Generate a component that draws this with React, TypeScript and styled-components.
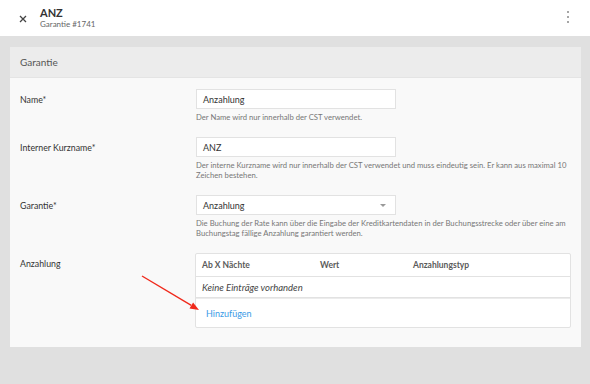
import styled, { createGlobalStyle } from "styled-components";

const GlobalStyle = createGlobalStyle`
  html, body {
    margin: 0;
    padding: 0;
    background: #e0e0e0;
    font-family: Lato, "Open Sans", "Liberation Sans", sans-serif;
  }
`;

const fields = [
  {
    label: "Name*",
    value: "Anzahlung",
    hint: "Der Name wird nur innerhalb der CST verwendet.",
  },
  {
    label: "Interner Kurzname*",
    value: "ANZ",
    hint: "Der interne Kurzname wird nur innerhalb der CST verwendet und muss eindeutig sein. Er kann aus maximal 10 Zeichen bestehen.",
  },
  {
    label: "Garantie*",
    value: "Anzahlung",
    select: true,
    hint: "Die Buchung der Rate kann über die Eingabe der Kreditkartendaten in der Buchungsstrecke oder über eine am Buchungstag fällige Anzahlung garantiert werden.",
  },
];

const App = () => {
  return (
    <>
      <GlobalStyle />
      <Page>
        <Header>
          <CloseButton>
            <svg width="8" height="8" viewBox="0 0 8 8">
              <path d="M1 1L7 7M7 1L1 7" stroke="#444" strokeWidth="1.3" />
            </svg>
          </CloseButton>
          <TitleBlock>
            <Title>ANZ</Title>
            <Subtitle>Garantie #1741</Subtitle>
          </TitleBlock>
          <Kebab>
            <span />
            <span />
            <span />
          </Kebab>
        </Header>

        <Content>
          <Card>
            <CardHeader>Garantie</CardHeader>
            <CardBody>
              {fields.map((f) => (
                <FieldRow key={f.label}>
                  <Label>{f.label}</Label>
                  <Control>
                    <Input>
                      {f.value}
                      {f.select && <Caret />}
                    </Input>
                    <Hint>{f.hint}</Hint>
                  </Control>
                </FieldRow>
              ))}

              <FieldRow>
                <Label>Anzahlung</Label>
                <Control>
                  <Table>
                    <HeadRow>
                      <HeadCell $width={118}>Ab X Nächte</HeadCell>
                      <HeadCell $width={93}>Wert</HeadCell>
                      <HeadCell>Anzahlungstyp</HeadCell>
                    </HeadRow>
                    <EmptyRow>Keine Einträge vorhanden</EmptyRow>
                    <FooterRow>
                      <AddLink>Hinzufügen</AddLink>
                    </FooterRow>
                  </Table>
                  <Arrow width="62" height="40" viewBox="0 0 62 40">
                    <path d="M1 1L50.3 30.4" stroke="#f0291b" strokeWidth="1.4" />
                    <path d="M58 35L48.5 33.4L52.1 27.4Z" fill="#f0291b" />
                  </Arrow>
                </Control>
              </FieldRow>
            </CardBody>
          </Card>
        </Content>
      </Page>
    </>
  );
};

export default App;

/* Styled Components */
const Page = styled.div`
  width: 590px;
  height: 384px;
  display: flex;
  flex-direction: column;
  background: #e0e0e0;
  overflow: hidden;
`;

const Header = styled.div`
  height: 36px;
  background: #ffffff;
  display: flex;
  align-items: center;
  padding: 0 21px 0 19px;
  flex-shrink: 0;
`;

const CloseButton = styled.div`
  width: 9px;
  display: flex;
  align-items: center;
  margin-top: 2px;
`;

const TitleBlock = styled.div`
  display: flex;
  flex-direction: column;
  margin-left: 12px;
  flex: 1;
`;

const Title = styled.div`
  font-size: 11px;
  font-weight: 700;
  color: #333;
  line-height: 13px;
`;

const Subtitle = styled.div`
  font-size: 8px;
  color: #666;
  line-height: 11px;
`;

const Kebab = styled.div`
  display: flex;
  flex-direction: column;
  gap: 3px;
  margin-bottom: 2px;

  span {
    width: 2px;
    height: 2px;
    background: #888;
    border-radius: 50%;
  }
`;

const Content = styled.div`
  padding: 11px 9px 0 10px;
`;

const Card = styled.div`
  background: #f9f9f9;
`;

const CardHeader = styled.div`
  height: 30px;
  background: #ececec;
  border-bottom: 1px solid #e4e4e4;
  display: flex;
  align-items: center;
  padding-left: 10px;
  font-size: 10px;
  color: #555;
`;

const CardBody = styled.div`
  padding: 11px 10px 19px 10px;
  display: flex;
  flex-direction: column;
  gap: 15px;
`;

const FieldRow = styled.div`
  display: flex;
`;

const Label = styled.div`
  width: 176px;
  font-size: 8.8px;
  color: #333;
  padding-top: 5px;
`;

const Control = styled.div`
  flex: 1;
  position: relative;
`;

const Input = styled.div`
  width: 200px;
  height: 20px;
  box-sizing: border-box;
  background: #fff;
  border: 1px solid #e2e2e2;
  display: flex;
  align-items: center;
  justify-content: space-between;
  padding: 0 8px 0 6px;
  font-size: 9px;
  color: #333;
`;

const Caret = styled.span`
  width: 0;
  height: 0;
  border-left: 3.5px solid transparent;
  border-right: 3.5px solid transparent;
  border-top: 3.5px solid #999;
  margin-right: 1px;
`;

const Hint = styled.div`
  margin-top: 3px;
  font-size: 7.7px;
  line-height: 10px;
  color: #777;
  padding-right: 2px;
`;

const Table = styled.div`
  width: 374px;
  background: #fff;
  border: 1px solid #e2e2e2;
  border-radius: 2px;
`;

const HeadRow = styled.div`
  display: flex;
  height: 22px;
  align-items: center;
  padding-left: 6px;
  border-bottom: 1px solid #e2e2e2;
`;

const HeadCell = styled.div<{ $width?: number }>`
  width: ${({ $width }) => ($width ? `${$width}px` : "auto")};
  font-size: 8.5px;
  font-weight: 700;
  color: #5a5a5a;
`;

const EmptyRow = styled.div`
  height: 20px;
  display: flex;
  align-items: center;
  padding-left: 6px;
  font-size: 9.5px;
  font-style: italic;
  color: #444;
  border-bottom: 1px solid #e2e2e2;
  box-shadow: 0 1px 0 #f3f3f3;
`;

const FooterRow = styled.div`
  height: 28px;
  display: flex;
  align-items: center;
  padding-left: 10px;
  border-top: 1px solid #ececec;
`;

const AddLink = styled.span`
  font-size: 9px;
  color: #3a9ae6;
  cursor: pointer;
`;

const Arrow = styled.svg`
  position: absolute;
  left: -54px;
  top: 22px;
`;
